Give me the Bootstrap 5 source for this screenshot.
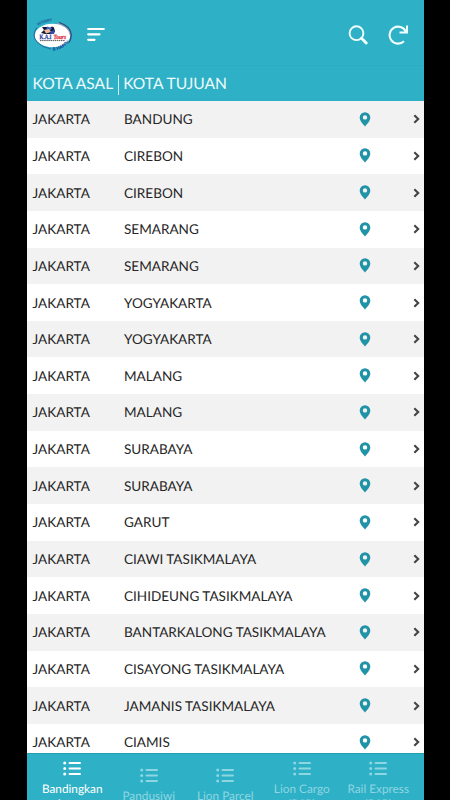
<!DOCTYPE html>
<html lang="id">
<head>
<meta charset="utf-8">
<meta name="viewport" content="width=device-width, initial-scale=1">
<title>Kota Asal - Kota Tujuan</title>
<link href="https://cdn.jsdelivr.net/npm/bootstrap@5.3.0/dist/css/bootstrap.min.css" rel="stylesheet">
<style>
html, body { height: 100%; background: #000; }
body { font-family: Lato, "Liberation Sans", sans-serif; overflow: hidden; text-rendering: geometricPrecision; }
.phone { width: 397px; height: 800px; margin-left: 26.5px; background: #fff; }
.teal { background: #2eb0c6; color: #fff; }
.topbar { height: 66px; padding: 4px 14.5px 0 6.5px; border-bottom: 1px solid #2dadc2; }
.menu-icon { margin-left: 14px; }
.refresh-icon { margin-left: 20px; }
.thead-row { height: 35px; padding: 2px 0 0 6px; font-size: 15.6px; color: #effafc; }
.divider { width: 1px; height: 20px; background: #d5eff4; margin: 0 4.5px; }
.route { height: 36.65px; font-size: 13.55px; color: #262626; padding-left: 6px; line-height: 20px; }
.route:nth-child(odd) { background: #f2f2f2; }
.origin { width: 91.5px; }
.pin { margin-right: 42.5px; }
.chevron { margin-right: 3.5px; }
.tabs { height: 47px; padding: 0 7px 0 7.5px; border-top: 1px solid #249fb4; font-size: 11.8px; line-height: 15px; }
.tab-item { width: 76.6px; color: #8ed6e2; padding-top: 7px; }
.tab-item.short { padding-top: 14px; }
.tab-item.current { color: #fff; }
.tab-item svg { margin-bottom: 5px; }
</style>
</head>
<body>
<svg class="d-none">
  <symbol id="pin" viewBox="0 0 12 15"><path fill="#2093a6" fill-rule="evenodd" d="M6 .3A5.300 5.300 0 0 0 .7 5.600C.7 9 4 12.400 6 14.500C8 12.400 11.300 9 11.300 5.600A5.300 5.300 0 0 0 6 .3zM6 3.200a2.200 2.200 0 1 1 0 4.400a2.200 2.200 0 0 1 0-4.400z"/></symbol>
  <symbol id="chev" viewBox="0 0 7 10"><path fill="none" stroke="#444" stroke-width="2.100" d="M1.300 1.200 5.200 5 1.300 8.800"/></symbol>
  <symbol id="list" viewBox="0 0 18 15"><g fill="none" stroke="currentColor" stroke-linecap="round"><path stroke-width="3" d="M1.700 2h.01M1.700 7.500h.01M1.700 13h.01"/><path stroke-width="2" d="M6.500 2H17M6.500 7.500H17M6.500 13H17"/></g></symbol>
</svg>
<main class="phone d-flex flex-column overflow-hidden">
  <header class="topbar teal d-flex align-items-center flex-shrink-0">
    <svg width="40" height="34" viewBox="0 0 40 34" role="img" aria-label="KAI Tours">
      <defs>
        <path id="arcTop" d="M4.500 8.500Q10 3.800 22 3"/>
        <path id="arcBottom" d="M19 33Q31 31.500 38.500 22"/>
      </defs>
      <ellipse cx="19.500" cy="17.500" rx="17.700" ry="11.800" fill="#fff"/>
      <path d="M4 9.500Q-2 17 4 24Q9 29.500 18 31" fill="none" stroke="#245f99" stroke-width=".9"/>
      <path d="M26 4.500Q37.500 8 38.300 16.500Q38.300 21 36 24.500" fill="none" stroke="#343f78" stroke-width="1.200"/>
      <path d="M24 5Q36 8.500 37 17" fill="none" stroke="#c48a9c" stroke-width=".7"/>
      <path d="M9 9h5l2 1.500 3-2 2 1 1 4-2 2.500h-8l-4-1 3-3z" fill="#171a35"/>
      <path d="M14 8.500l5 1.500-2 3-4 0z" fill="#4168bd"/><path d="M11 12l5-1 2 3-5 1.500z" fill="#f2b79c"/><path d="M18 13l4-1-1 4h-4z" fill="#2d4fab"/>
      <text x="6.500" y="20.800" font-family="Liberation Serif, serif" font-weight="700" font-size="6.500" fill="#2c3b9b" stroke="#2c3b9b" stroke-width=".25" textLength="12" lengthAdjust="spacingAndGlyphs">K.A.I</text>
      <text x="20.500" y="20.800" font-family="Liberation Serif, serif" font-weight="700" font-style="italic" font-size="6.500" fill="#e02e3f" stroke="#e02e3f" stroke-width=".25" textLength="12.500" lengthAdjust="spacingAndGlyphs">Tours</text>
      <path d="M7 22.600h25" stroke="#555" stroke-width="1" stroke-dasharray="1.500 .6"/>
      <text font-family="Lato, sans-serif" font-weight="900" font-size="4" fill="#1d5f98"><textPath href="#arcTop" startOffset="1">WORRY</textPath></text>
      <text font-family="Lato, sans-serif" font-weight="900" font-size="4.400" fill="#123c91"><textPath href="#arcBottom" startOffset="1">B HAPPY</textPath></text>
    </svg>
    <svg class="menu-icon" width="18" height="15" viewBox="0 0 18 15"><path d="M1.200 2H16.800M1.200 7.300H12.500M1.200 12.800H7.500" stroke="#fff" stroke-width="2.200" stroke-linecap="round"/></svg>
    <svg class="ms-auto" width="20" height="20" viewBox="0 0 20 20" fill="none" stroke="#f2ffff"><circle cx="8.500" cy="8.200" r="6.900" stroke-width="1.900"/><path d="M13.500 13.200 18.200 18" stroke-width="2.900" stroke-linecap="round"/></svg>
    <svg class="refresh-icon" width="21" height="20" viewBox="0 0 21 20" fill="none" stroke="#f2ffff" stroke-width="2.100"><path d="M16 16.300A8.500 8.500 0 1 1 17.800 6.500M19 .5V7.500H11.500"/></svg>
  </header>
  <div class="thead-row teal d-flex align-items-center flex-shrink-0">
    <span>KOTA ASAL</span><span class="divider"></span><span>KOTA TUJUAN</span>
  </div>
  <section id="routes" class="flex-grow-1 overflow-hidden"></section>
  <nav class="tabs teal d-flex text-center flex-shrink-0 overflow-hidden">
    <div class="tab-item current"><svg class="d-block mx-auto" width="18" height="15"><use href="#list"/></svg>Bandingkan<br>harga</div>
    <div class="tab-item short"><svg class="d-block mx-auto" width="18" height="15"><use href="#list"/></svg>Pandusiwi</div>
    <div class="tab-item short"><svg class="d-block mx-auto" width="18" height="15"><use href="#list"/></svg>Lion Parcel</div>
    <div class="tab-item"><svg class="d-block mx-auto" width="18" height="15"><use href="#list"/></svg>Lion Cargo<br>(BSP)</div>
    <div class="tab-item"><svg class="d-block mx-auto" width="18" height="15"><use href="#list"/></svg>Rail Express<br>(BSP)</div>
  </nav>
</main>
<script>
const cities = ["BANDUNG","CIREBON","CIREBON","SEMARANG","SEMARANG","YOGYAKARTA","YOGYAKARTA","MALANG","MALANG","SURABAYA","SURABAYA","GARUT","CIAWI TASIKMALAYA","CIHIDEUNG TASIKMALAYA","BANTARKALONG TASIKMALAYA","CISAYONG TASIKMALAYA","JAMANIS TASIKMALAYA","CIAMIS"];
document.getElementById("routes").innerHTML = cities.map(c => `<div class="route d-flex align-items-center"><span class="origin">JAKARTA</span><span class="flex-grow-1">${c}</span><svg class="pin" width="12" height="15"><use href="#pin"/></svg><svg class="chevron" width="7" height="10"><use href="#chev"/></svg></div>`).join("");
</script>
<script src="https://cdn.jsdelivr.net/npm/bootstrap@5.3.0/dist/js/bootstrap.bundle.min.js"></script>
</body>
</html>
